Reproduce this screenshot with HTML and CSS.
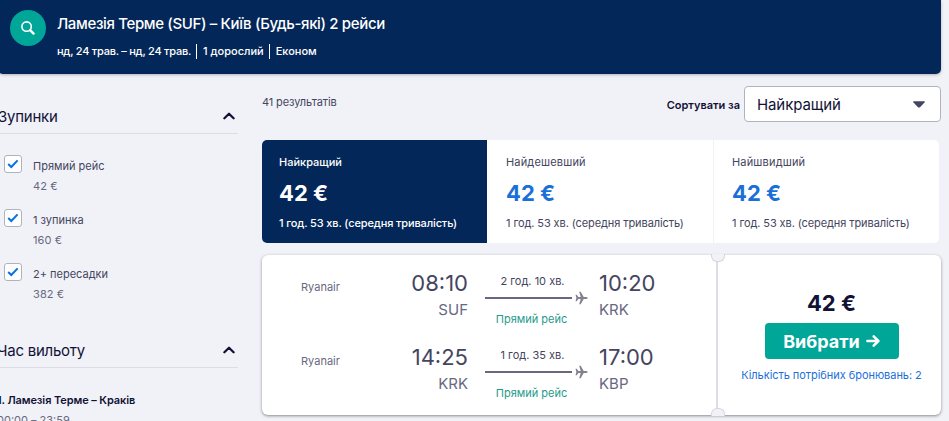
FILE: index.html
```html
<!DOCTYPE html>
<html lang="uk">
<head>
    <meta charset="UTF-8">
    <meta name="viewport" content="width=device-width, initial-scale=1.0">
    <title>Ламезія Терме – Київ</title>
    <link rel="stylesheet" href="styles.css">
</head>
<body>

    <!-- Search summary -->
    <header class="search-bar">
        <button class="search-button" aria-label="Пошук">
            <svg width="16" height="16" viewBox="0 0 16 16" fill="none" stroke="#fff" stroke-linecap="round">
                <circle cx="6.6" cy="6.6" r="4.7" stroke-width="1.6"/>
                <path d="M10.3 10.3L13.6 13.6" stroke-width="2.4"/>
            </svg>
        </button>
        <div class="search-info">
            <h1>Ламезія Терме (SUF) – Київ (Будь-які) 2 рейси</h1>
            <div class="search-details">
                <span class="dates">нд, 24 трав. – нд, 24 трав.</span>
                <span>1 дорослий</span>
                <span>Економ</span>
            </div>
        </div>
    </header>

    <div class="page">
        <!-- Filters -->
        <aside class="filters">
            <div class="filter-header">
                <h2>Зупинки</h2>
                <svg width="12" height="8" viewBox="0 0 12 8" fill="none" stroke="#111236" stroke-width="2.3" stroke-linejoin="round" stroke-linecap="round"><path d="M1.4 6.3L6 1.8L10.6 6.3"/></svg>
            </div>
            <div class="stops">
                <div class="stop">
                    <span class="checkbox"><svg width="12" height="10" viewBox="0 0 12 10" fill="none" stroke="#0770e3" stroke-width="2"><path d="M1.2 5L4.3 8L10.6 1.4"/></svg></span>
                    <div class="stop-text"><span>Прямий рейс</span><span class="stop-price">42 €</span></div>
                </div>
                <div class="stop">
                    <span class="checkbox"><svg width="12" height="10" viewBox="0 0 12 10" fill="none" stroke="#0770e3" stroke-width="2"><path d="M1.2 5L4.3 8L10.6 1.4"/></svg></span>
                    <div class="stop-text"><span>1 зупинка</span><span class="stop-price">160 €</span></div>
                </div>
                <div class="stop">
                    <span class="checkbox"><svg width="12" height="10" viewBox="0 0 12 10" fill="none" stroke="#0770e3" stroke-width="2"><path d="M1.2 5L4.3 8L10.6 1.4"/></svg></span>
                    <div class="stop-text"><span>2+ пересадки</span><span class="stop-price">382 €</span></div>
                </div>
            </div>
            <div class="filter-header time-header">
                <h2>Час вильоту</h2>
                <svg width="12" height="8" viewBox="0 0 12 8" fill="none" stroke="#111236" stroke-width="2.3" stroke-linejoin="round" stroke-linecap="round"><path d="M1.4 6.3L6 1.8L10.6 6.3"/></svg>
            </div>
            <div class="departure">
                <h3>1. Ламезія Терме – Краків</h3>
                <span class="departure-range">00:00 – 23:59</span>
            </div>
        </aside>

        <!-- Results -->
        <main class="results">
            <div class="toolbar">
                <span class="count">41 результатів</span>
                <div class="sort">
                    <span class="sort-label">Сортувати за</span>
                    <div class="select">
                        <span>Найкращий</span>
                        <svg width="12" height="7" viewBox="0 0 12 7"><path d="M0.8 0.2H11.2Q12.4 0.4 11.5 1.5L7 6.2Q6 7 5 6.2L0.5 1.5Q-0.4 0.4 0.8 0.2Z" fill="#444560"/></svg>
                    </div>
                </div>
            </div>

            <div class="tabs">
                <div class="tab active">
                    <span class="tab-name">Найкращий</span>
                    <span class="tab-price">42 €</span>
                    <span class="tab-time">1 год. 53 хв. (середня тривалість)</span>
                </div>
                <div class="tab">
                    <span class="tab-name">Найдешевший</span>
                    <span class="tab-price">42 €</span>
                    <span class="tab-time">1 год. 53 хв. (середня тривалість)</span>
                </div>
                <div class="tab">
                    <span class="tab-name">Найшвидший</span>
                    <span class="tab-price">42 €</span>
                    <span class="tab-time">1 год. 53 хв. (середня тривалість)</span>
                </div>
            </div>

            <div class="ticket">
                <div class="legs">
                    <div class="leg">
                        <span class="airline">Ryanair</span>
                        <div class="point from"><span class="time">08:10</span><span class="code">SUF</span></div>
                        <div class="route">
                            <span class="duration">2 год. 10 хв.</span>
                            <div class="line">
                                <svg width="13" height="14" viewBox="0 0 13 14" fill="#85808f"><path d="M0.5 3.8H1.7L3.4 6H5.7L4.2 0.8H5.7L8.7 6H11.4Q12.8 6.3 12.8 7T11.4 8H8.7L5.7 13.2H4.2L5.7 8H3.4L1.7 10.2H0.5L1.4 7Z"/></svg>
                            </div>
                            <span class="direct-label">Прямий рейс</span>
                        </div>
                        <div class="point to"><span class="time">10:20</span><span class="code">KRK</span></div>
                    </div>
                    <div class="leg">
                        <span class="airline">Ryanair</span>
                        <div class="point from"><span class="time">14:25</span><span class="code">KRK</span></div>
                        <div class="route">
                            <span class="duration">1 год. 35 хв.</span>
                            <div class="line">
                                <svg width="13" height="14" viewBox="0 0 13 14" fill="#85808f"><path d="M0.5 3.8H1.7L3.4 6H5.7L4.2 0.8H5.7L8.7 6H11.4Q12.8 6.3 12.8 7T11.4 8H8.7L5.7 13.2H4.2L5.7 8H3.4L1.7 10.2H0.5L1.4 7Z"/></svg>
                            </div>
                            <span class="direct-label">Прямий рейс</span>
                        </div>
                        <div class="point to"><span class="time">17:00</span><span class="code">KBP</span></div>
                    </div>
                </div>
                <div class="offer">
                    <span class="offer-price">42 €</span>
                    <button class="select-button">
                        <span>Вибрати</span>
                        <svg width="14" height="14" viewBox="0 0 14 14" fill="none" stroke="#fff" stroke-width="2.5" stroke-linecap="round" stroke-linejoin="round"><path d="M1.4 7H12M7.7 2.3L12.4 7L7.7 11.7"/></svg>
                    </button>
                    <span class="bookings">Кількість потрібних бронювань: 2</span>
                </div>
            </div>
        </main>
    </div>

</body>
</html>
```

FILE: styles.css
```css
* {
    box-sizing: border-box;
}

body {
    margin: 0;
    height: 421px;
    overflow: hidden;
    font-family: Inter, "Noto Sans", sans-serif;
    font-size: 11px;
    line-height: 20px;
    color: #444560;
    background-color: #f1f2f8;
    white-space: nowrap;
}

h1, h2, h3 {
    margin: 0;
}

button {
    border: none;
    font-family: inherit;
    padding: 0;
}

svg {
    display: block;
    flex: none;
}

/* Search summary */
.search-bar {
    display: flex;
    width: 943px;
    height: 74px;
    margin-left: -2px;
    padding: 10px 12px;
    gap: 11px;
    color: white;
    background-color: #042759;
    border-radius: 0 0 5px 5px;
    box-shadow: 0 1px 3px rgba(37, 32, 31, 0.3);
}

.search-button {
    display: flex;
    align-items: center;
    justify-content: center;
    width: 36px;
    height: 36px;
    border-radius: 50%;
    background-color: #00a698;
}

.search-info h1 {
    padding-top: 1px;
    font-size: 15px;
    font-weight: 500;
    line-height: 26px;
    letter-spacing: -0.36px;
}

.search-details {
    display: flex;
    margin-top: 7px;
    line-height: 15px;
    font-weight: 500;
}

.search-details span + span {
    border-left: 1px solid white;
    margin-left: 5px;
    padding-left: 6px;
}

.search-details .dates {
    letter-spacing: -0.25px;
}

.page {
    display: flex;
    padding-top: 12px;
}

/* Filters */
.filters {
    width: 238px;
    margin-right: 24px;
}

.filter-header {
    display: flex;
    align-items: center;
    justify-content: space-between;
    height: 48px;
    margin-left: -2px;
    padding-right: 3px;
    border-bottom: 1px solid #dddde5;
}

.filter-header h2 {
    padding-top: 14px;
    font-size: 15px;
    font-weight: 400;
    letter-spacing: -0.25px;
    color: #111236;
}

.filter-header svg {
    margin-top: 12px;
}

.time-header {
    margin-left: -3px;
}

.stops {
    display: flex;
    flex-direction: column;
    gap: 14px;
    height: 186px;
    padding: 21px 0 0 4px;
}

.stop {
    display: flex;
    gap: 11px;
}

.checkbox {
    display: flex;
    align-items: center;
    justify-content: center;
    width: 18px;
    height: 18px;
    border: 1px solid #b2b2bf;
    border-radius: 3px;
    background-color: white;
}

.stop-text {
    display: flex;
    flex-direction: column;
    padding-top: 1px;
    height: 40px;
}

.stop-price {
    letter-spacing: 0.1px;
    color: #68697f;
}

.departure {
    display: flex;
    flex-direction: column;
    margin-left: -3px;
    padding-top: 22px;
}

.departure h3 {
    font-size: 11px;
    font-weight: 600;
    letter-spacing: -0.1px;
    color: #111236;
}

.departure-range {
    color: #68697f;
}

/* Results */
.results {
    width: 679px;
}

.toolbar {
    display: flex;
    justify-content: space-between;
    height: 36px;
}

.count {
    margin-top: 6px;
    letter-spacing: -0.12px;
}

.sort {
    display: flex;
    align-items: center;
    gap: 4px;
}

.sort-label {
    padding-top: 1px;
    font-weight: 600;
    color: #111236;
}

.select {
    display: flex;
    align-items: center;
    justify-content: space-between;
    width: 197px;
    height: 36px;
    padding: 1px 15px 0 12px;
    border: 1px solid #b2b2bf;
    border-radius: 4px;
    background-color: white;
    font-size: 15px;
    letter-spacing: -0.1px;
    color: #111236;
}

.tabs {
    display: grid;
    grid-template-columns: 225px 226px 226px;
    width: 677px;
    height: 103px;
    margin-top: 18px;
    border-radius: 5px;
    overflow: hidden;
    background-color: white;
}

.tab {
    display: flex;
    flex-direction: column;
    padding: 12px 0 0 19px;
}

.tab:last-child {
    padding-left: 18px;
    border-left: 1px solid #f1f2f8;
}

.tab-name {
    letter-spacing: 0.17px;
}

.tab-price {
    height: 41px;
    line-height: 42px;
    font-size: 22px;
    font-weight: 700;
    color: #1b6fd8;
}

.tab-time {
    letter-spacing: -0.09px;
}

.tab.active {
    padding-left: 17px;
    color: white;
    font-weight: 500;
    background-color: #042759;
}

.active .tab-name {
    letter-spacing: 0;
}

.active .tab-price {
    color: white;
}

.active .tab-time {
    letter-spacing: -0.13px;
}

/* Ticket */
.ticket {
    display: flex;
    position: relative;
    height: 160px;
    margin-top: 12px;
    border-radius: 6px;
    background-color: white;
    box-shadow: 0 1px 3px rgba(37, 32, 31, 0.5);
}

/* Round notches at both ends of the tear line */
.ticket::before,
.ticket::after {
    content: "";
    position: absolute;
    left: 449px;
    width: 12px;
    height: 7px;
    background-color: #f1f2f8;
    border: 1px solid #d6d6de;
}

.ticket::before {
    top: -1px;
    border-top: none;
    border-radius: 0 0 6px 6px;
}

.ticket::after {
    bottom: -1px;
    border-bottom: none;
    border-radius: 6px 6px 0 0;
}

.legs {
    width: 456px;
    padding-top: 12px;
    border-right: 2px solid #dddde5;
}

.leg {
    display: grid;
    grid-template-columns: 100px 67px 103px 60px;
    height: 74px;
    padding-left: 39px;
}

.airline {
    margin-top: 10px;
    color: #68697f;
}

.point {
    display: flex;
    flex-direction: column;
}

.point.from {
    align-items: flex-end;
}

.point.to {
    margin-left: 28px;
}

.time {
    font-size: 22px;
    line-height: 32px;
}

.code {
    font-size: 15px;
    line-height: 22px;
    color: #68697f;
}

.route {
    display: flex;
    flex-direction: column;
    margin-left: 17px;
    padding-top: 4px;
}

.duration,
.direct-label {
    width: 95px;
    text-align: center;
}

.line {
    display: flex;
    align-items: center;
    gap: 3px;
    width: 103px;
    height: 14px;
}

.line::before {
    content: "";
    width: 87px;
    height: 2px;
    background-color: #68697f;
}

.direct-label {
    width: 93px;
    margin-top: 4px;
    color: #269b8d;
}

.offer {
    display: flex;
    flex-direction: column;
    align-items: center;
    flex: 1;
    padding: 32px 0 0 4px;
}

.offer-price {
    font-size: 22px;
    font-weight: 700;
    line-height: 32px;
    color: #111236;
}

.select-button {
    display: flex;
    align-items: center;
    justify-content: center;
    gap: 6px;
    width: 134px;
    height: 36px;
    margin-top: 4px;
    border-radius: 4px;
    font-size: 18px;
    font-weight: 700;
    color: white;
    background-color: #00a698;
}

.bookings {
    margin-top: 6px;
    letter-spacing: -0.05px;
    color: #1b6fd8;
}
```
